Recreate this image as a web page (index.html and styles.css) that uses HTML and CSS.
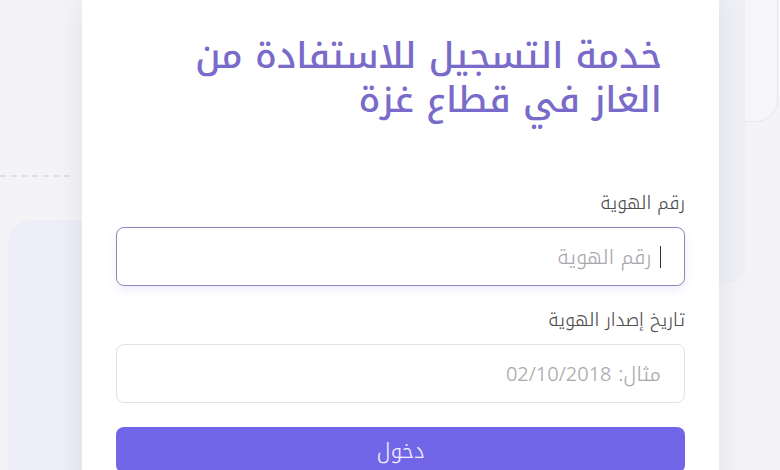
FILE: index.html
```html
<!DOCTYPE html>
<html lang="ar" dir="rtl">
<head>
    <meta charset="UTF-8">
    <meta name="viewport" content="width=device-width, initial-scale=1.0">
    <title>خدمة التسجيل للاستفادة من الغاز</title>
    <link rel="stylesheet" href="styles.css">
</head>
<body>

<div class="scene">
    <!-- أشكال الخلفية -->
    <div class="deco deco-top-right"></div>
    <div class="deco deco-right"></div>
    <div class="deco deco-left"></div>
    <div class="deco deco-dash"></div>

    <div class="card">
        <h1 class="title">خدمة التسجيل للاستفادة من<br>الغاز في قطاع غزة</h1>

        <form class="form">
            <label class="field">
                <span class="label">رقم الهوية</span>
                <span class="input focused"><span class="caret"></span><span class="placeholder">رقم الهوية</span></span>
            </label>

            <label class="field">
                <span class="label">تاريخ إصدار الهوية</span>
                <span class="input"><span class="placeholder">مثال: 02/10/2018</span></span>
            </label>

            <button type="button" class="btn">دخول</button>
        </form>
    </div>
</div>

</body>
</html>
```

FILE: styles.css
```css
body {
    margin: 0;
    background-color: #f4f4f6;
    font-family: "Noto Kufi Arabic", "Noto Sans Arabic", sans-serif;
    overflow: hidden;
}

.scene {
    position: relative;
    width: 780px;
    height: 470px;
    overflow: hidden;
}

/* الخلفية */
.deco {
    position: absolute;
}

.deco-top-right {
    left: 600px;
    top: -40px;
    width: 176px;
    height: 160px;
    border: 1px solid #e6e6ee;
    border-radius: 0 0 22px 0;
    background-color: #f6f6f9;
}

.deco-right {
    left: 700px;
    top: -20px;
    width: 45px;
    height: 303px;
    border-radius: 0 0 16px 0;
    background-color: #efeff6;
}

.deco-left {
    left: 8px;
    top: 220px;
    width: 200px;
    height: 300px;
    border-radius: 22px;
    background-color: #eeeef8;
}

.deco-dash {
    left: 0;
    top: 175px;
    width: 70px;
    border-top: 2px dashed #e0e0e4;
}

/* البطاقة */
.card {
    position: relative;
    margin-right: 61px;
    width: 569px;
    height: 470px;
    padding: 34px 34px 0;
    background-color: #fff;
    box-shadow: 0 0 30px rgba(0, 0, 0, 0.08);
}

.title {
    margin: 0 23px 0 0;
    font-size: 36px;
    line-height: 44px;
    font-weight: 500;
    color: #786bc9;
}

.form {
    margin-top: 71px;
    display: flex;
    flex-direction: column;
}

.field {
    display: flex;
    flex-direction: column;
    margin-bottom: 24px;
}

.label {
    font-size: 18px;
    line-height: 20px;
    font-weight: 300;
    color: #4f4f4f;
    margin-bottom: 14px;
}

.input {
    display: flex;
    align-items: center;
    height: 57px;
    padding: 0 23px;
    border: 1px solid #e1e1e4;
    border-radius: 8px;
    background-color: #fff;
}

.input.focused {
    border: 1.5px solid #8b85c2;
    box-shadow: 0 4px 10px rgba(120, 110, 200, 0.12);
}

.caret {
    width: 1.5px;
    height: 22px;
    background-color: #333;
    margin-left: 8px;
}

.placeholder {
    font-size: 20px;
    font-weight: 300;
    color: #a9a9ad;
}

.btn {
    height: 46px;
    border: 0;
    border-radius: 8px;
    background-color: #7166e8;
    color: #f2f0ff;
    font-family: inherit;
    font-size: 21px;
    font-weight: 300;
    padding-bottom: 0;
}
```
